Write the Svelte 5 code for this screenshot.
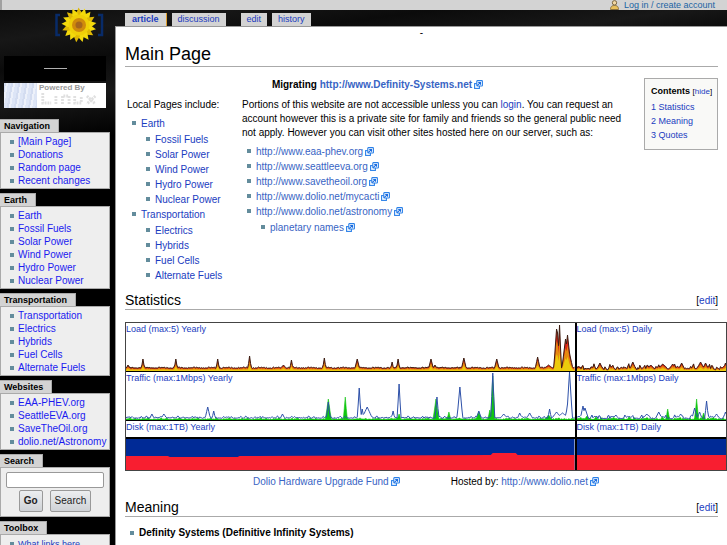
<script>
  const portlets = [
    { title: 'Navigation', items: ['[Main Page]', 'Donations', 'Random page', 'Recent changes'] },
    { title: 'Earth', items: ['Earth', 'Fossil Fuels', 'Solar Power', 'Wind Power', 'Hydro Power', 'Nuclear Power'] },
    { title: 'Transportation', items: ['Transportation', 'Electrics', 'Hybrids', 'Fuel Cells', 'Alternate Fuels'] },
    { title: 'Websites', items: ['EAA-PHEV.org', 'SeattleEVA.org', 'SaveTheOil.org', 'dolio.net/Astronomy'] }
  ];
  const local = [
    { name: 'Earth', items: ['Fossil Fuels', 'Solar Power', 'Wind Power', 'Hydro Power', 'Nuclear Power'] },
    { name: 'Transportation', items: ['Electrics', 'Hybrids', 'Fuel Cells', 'Alternate Fuels'] }
  ];
  const sites = [
    'http://www.eaa-phev.org',
    'http://www.seattleeva.org',
    'http://www.savetheoil.org',
    'http://www.dolio.net/mycacti'
  ];

  // Each peak is [x, height, half width]; a deterministic ripple fills the rest.
  function series(width, base, amp, peaks, seed = 1) {
    const pts = [];
    for (let x = 0; x <= width; x += 1) {
      const r = Math.abs(Math.sin(x * 0.63 * seed) * Math.sin(x * 0.19 + seed) + Math.sin(x * 1.7 + seed) * 0.4);
      let h = base + amp * r;
      for (const [px, ph, pw] of peaks) {
        const d = Math.abs(x - px);
        if (d < pw) h = Math.max(h, ph * (1 - d / pw));
      }
      pts.push([x, h]);
    }
    return pts;
  }
  const line = (pts, k = 1) => pts.map(([x, h]) => `${x},${(48 - h * k).toFixed(1)}`).join(' ');
  const area = (pts, w, k = 1) => `0,48 ${line(pts, k)} ${w},48`;

  const loadYear = series(450, 2.6, 1.4, [
    [2, 6, 3], [17, 12, 2], [50, 12, 2], [92, 12, 2], [124, 15, 2], [158, 6, 5], [166, 11, 2], [199, 13, 2],
    [232, 12, 3], [267, 9, 2], [273, 12, 2], [306, 12, 3], [310, 6, 3], [339, 13, 3], [372, 12, 3], [413, 14, 3], [424, 6, 8],
    [432, 42, 3], [433, 38, 3], [435, 46, 2], [441, 32, 4], [443, 36, 4], [446, 13, 3]
  ]);
  const loadDay = series(150, 1.2, 4.5, [[23, 8, 4], [56, 9, 4], [74, 6, 6], [86, 7, 7], [96, 7, 5], [105, 8, 4], [124, 9, 5], [129, 8, 4], [149, 8, 3]], 1.3);
  const blueYear = series(450, 1.6, 1.8, [
    [26, 6, 3], [38, 6, 4], [82, 13, 3], [88, 9, 2], [157, 6, 3], [203, 18, 2], [234, 32, 2], [237, 11, 2], [242, 13, 6],
    [268, 9, 2], [274, 36, 2], [312, 23, 2], [335, 33, 3], [354, 9, 3], [368, 47, 2], [379, 6, 5], [395, 7, 3],
    [405, 7, 4], [425, 11, 2], [432, 8, 6], [438, 7, 9], [444, 18, 4], [445, 48, 3]
  ], 1.1);
  const greenYear = series(450, 0.4, 1.4, [[203, 21, 3], [220, 23, 2], [311, 21, 3], [324, 8, 2], [354, 8, 3], [365, 10, 2], [368, 44, 2], [274, 6, 2], [424, 5, 4]], 0.8);
  const blueDay = series(150, 1, 3.5, [[6, 14, 3], [8, 12, 4], [39, 5, 4], [70, 6, 5], [82, 8, 4], [104, 6, 4], [118, 12, 3], [123, 8, 3], [130, 19, 2], [140, 6, 4], [149, 8, 3]], 1.2);
  const greenDay = series(150, 0.3, 2, [[91, 11, 2], [120, 21, 2], [127, 7, 2], [10, 4, 3]], 0.9);

  const charts = [
    { span: 'Yearly', w: 450, load: loadYear, blue: blueYear, green: greenYear, disk: '0,17 42,17 44,18 112,18 114,17 366,16 368,14 391,14 393,16 450,16' },
    { span: 'Daily', w: 150, load: loadDay, blue: blueDay, green: greenDay, disk: '0,16 150,16' }
  ];
</script>

{#snippet ext()}
  <svg class="ext" viewBox="0 0 9 9" aria-hidden="true">
    <rect x=".6" y="3.600" width="4.800" height="4.800" fill="#fff" stroke="#2a80e8" stroke-width="1.100" />
    <rect x="2.800" y=".6" width="5.600" height="5.400" rx=".6" fill="#fff" stroke="#2a80e8" stroke-width="1.100" />
    <path d="M3.200 5.600L6 2.900M4.200 2.500h2.300v2.300" fill="none" stroke="#1a6ce0" stroke-width="1.100" />
  </svg>
{/snippet}

<div class="page">
  <header class="personal">
    <svg class="user" viewBox="0 0 9 10" aria-hidden="true">
      <path d="M.5 9.500C.5 6 2.500 5.500 4.500 5.500S8.500 6 8.500 9.500z" fill="#e9c05c" stroke="#8b7342" />
      <circle cx="4.500" cy="2.800" r="2.200" fill="#f3d9a4" stroke="#7c6844" />
    </svg>
    <a href="#login">Log in / create account</a>
  </header>

  <div class="body">
    <aside>
      <a class="logo" href="#main" aria-label="Main Page">
        <svg class="flower" viewBox="0 0 50 38" aria-hidden="true">
          <path d="M6 9H2.500v20H6M44 9h4v20h-4" fill="none" stroke="#082b68" stroke-width="2.500" />
          {#each Array(17) as _, i}
            <path d="M25 19L22 8 24.500 1.500 28 7z" fill={i % 3 ? '#f4da0c' : '#dfb804'} transform={`rotate(${i * 21.200} 25 19)`} />
          {/each}
          <circle cx="25" cy="19" r="10.500" fill="#f0cf08" />
          <circle cx="25" cy="19" r="7" fill="#cf8a0c" />
          <circle cx="25" cy="19" r="3.500" fill="#a5651c" />
        </svg>
        <div class="banner"></div>
        <div class="powered">
          <div class="tux"></div>
          <div class="by">Powered By
            <svg viewBox="0 0 66 14" preserveAspectRatio="none" aria-hidden="true">
              <path d="M4 1v10h9M18 4v8M25 12V4h7v8M38 4v7h7V4M51 4l9 8M60 4l-9 8" fill="none" stroke="#e0e0e0" stroke-width="3" stroke-dasharray="2 1" />
            </svg>
          </div>
        </div>
      </a>

      {#each portlets as p}
        <section class="portlet">
          <h5>{p.title}</h5>
          <div class="box">
            <ul>
              {#each p.items as item}<li><a href="#p">{item}</a></li>{/each}
            </ul>
          </div>
        </section>
      {/each}

      <section class="portlet">
        <h5><label for="q">Search</label></h5>
        <form class="box search" onsubmit={(e) => e.preventDefault()}>
          <input id="q" type="text" />
          <div class="buttons">
            <button type="submit"><b>Go</b></button>
            <button type="submit">Search</button>
          </div>
        </form>
      </section>

      <section class="portlet tools">
        <h5>Toolbox</h5>
        <div class="box">
          <ul><li><a href="#links">What links here</a></li></ul>
        </div>
      </section>
    </aside>

    <div class="column">
      <nav>
        <a class="tab active" href="#article">article</a>
        <a class="tab" href="#discussion">discussion</a>
        <a class="tab gap" href="#edit">edit</a>
        <a class="tab" href="#history">history</a>
      </nav>

      <main>
        <div class="notice">-</div>
        <h1>Main Page</h1>

        <div class="intro">
          <div class="text">
            <p class="migrating">Migrating <a class="out" href="#definity">http://www.Definity-Systems.net</a>{@render ext()}</p>
            <div class="cols">
              <div class="local">
                <p>Local Pages include:</p>
                <ul>
                  {#each local as group}
                    <li>
                      <a href="#g">{group.name}</a>
                      <ul>
                        {#each group.items as item}<li><a href="#i">{item}</a></li>{/each}
                      </ul>
                    </li>
                  {/each}
                </ul>
              </div>
              <div class="about">
                <p>Portions of this website are not accessible unless you can <a href="#login">login</a>. You can request an account however this is a private site for family and friends so the general public need not apply. However you can visit other sites hosted here on our server, such as:</p>
                <ul>
                  {#each sites as s}<li><a class="out" href="#s">{s}</a>{@render ext()}</li>{/each}
                  <li>
                    <a class="out" href="#astronomy">http://www.dolio.net/astronomy</a>{@render ext()}
                    <ul><li><a class="out" href="#names">planetary names</a>{@render ext()}</li></ul>
                  </li>
                </ul>
              </div>
            </div>
          </div>
          <div class="toc">
            <p><b>Contents</b> <small>[<a href="#hide">hide</a>]</small></p>
            <a href="#statistics">1 Statistics</a>
            <a href="#meaning">2 Meaning</a>
            <a href="#quotes">3 Quotes</a>
          </div>
        </div>

        <div class="heading">
          <h2>Statistics</h2>
          <span>[<a href="#edit1">edit</a>]</span>
        </div>

        <div class="charts">
          {#each charts as c}
            <div class="chart">
              <div class="plot">
                <a href="#load">Load (max:5) {c.span}</a>
                <svg viewBox={`0 0 ${c.w} 48`} preserveAspectRatio="none" aria-hidden="true">
                  <polygon points={area(c.load, c.w)} fill="#dc2418" />
                  <polygon points={area(c.load, c.w, 0.72)} fill="#e68a10" />
                  <polygon points={area(c.load, c.w, 0.4)} fill="#eccb0c" />
                  <polyline points={line(c.load)} fill="none" stroke="#3a1c10" />
                </svg>
              </div>
              <div class="plot">
                <a href="#traffic">Traffic (max:1Mbps) {c.span}</a>
                <svg viewBox={`0 0 ${c.w} 48`} preserveAspectRatio="none" aria-hidden="true">
                  <polygon points={area(c.green, c.w)} fill="#0fc60f" stroke="#0fc60f" stroke-width=".6" />
                  <polyline points={line(c.blue)} fill="none" stroke="#2c4fa8" />
                </svg>
              </div>
              <div class="disk">
                <a href="#disk">Disk (max:1TB) {c.span}</a>
                <svg viewBox={`0 0 ${c.w} 31`} preserveAspectRatio="none" aria-hidden="true">
                  <rect width={c.w} height="31" fill="#002a96" />
                  <polygon points={`0,31 ${c.disk} ${c.w},31`} fill="#f81e30" />
                </svg>
              </div>
            </div>
          {/each}
        </div>

        <div class="credits">
          <span><a class="out" href="#fund">Dolio Hardware Upgrade Fund</a>{@render ext()}</span>
          <span>Hosted by: <a class="out" href="#dolio">http://www.dolio.net</a>{@render ext()}</span>
        </div>

        <div class="heading">
          <h2>Meaning</h2>
          <span>[<a href="#edit2">edit</a>]</span>
        </div>
        <ul class="meaning">
          <li><b>Definity Systems (Definitive Infinity Systems)</b></li>
        </ul>
      </main>
    </div>
  </div>
</div>

<style>
  :global(body) { background: #000; }
  .page {
    height: 100vh;
    overflow: hidden;
    display: flex;
    flex-direction: column;
    font: 10px/14px "Liberation Sans", Arial, sans-serif;
    color: #000;
    background: linear-gradient(172deg, #090909 0, #171717 40px, #0b0b0b 70px, #181818 105px, #000 150px);
  }
  p, h1, h2, h5, ul { margin: 0; padding: 0; font-weight: normal; }
  ul { list-style: none; }
  a { color: #1a3cc0; text-decoration: none; }
  .out { color: #3864c4; }
  .ext { width: 9px; height: 9px; margin-left: 2px; vertical-align: -1px; }
  li { position: relative; }
  li::before {
    content: "";
    position: absolute;
    left: -9px;
    top: 5px;
    width: 4px;
    height: 4px;
    background: #638c9c;
  }

  .personal {
    flex: none;
    height: 10px;
    display: flex;
    justify-content: flex-end;
    align-items: center;
    gap: 5px;
    padding-right: 12px;
    background: #d3d3d3;
    border-left: 2px solid #a0a0a0;
    font-size: 9px;
    line-height: 10px;
  }
  .personal a { color: #2064a4; }
  .user { width: 9px; height: 10px; }

  .body { flex: 1; display: flex; gap: 5px; min-height: 0; }
  aside { flex: none; width: 110px; }
  .logo { display: block; padding: 0 4px; margin-bottom: 11px; }
  .flower { display: block; position: relative; width: 50px; height: 38px; margin: -4px 0 12px 50px; }
  .banner {
    height: 25px;
    margin-bottom: 2px;
    background: linear-gradient(#b0b0b0, #b0b0b0) center / 23px 1px no-repeat, #000;
  }
  .powered { display: flex; height: 25px; background: #fff; color: #999; }
  .tux { width: 33px; background: repeating-linear-gradient(100deg, #d3dcf0 0 2px, #edf1fa 2px 4px, #dde5f6 4px 7px); }
  .by { padding-left: 2px; font: bold 8px/9px "Liberation Sans", sans-serif; }
  .by svg { display: block; width: 62px; height: 14px; }

  .portlet { margin-bottom: 4px; }
  h5 {
    display: table;
    height: 13px;
    padding: 0 8px 0 4px;
    box-sizing: border-box;
    background: #d3d3d3;
    border-top: 1px solid #aaa;
    border-right: 1px solid #aaa;
    font-size: 9px;
    line-height: 12px;
    font-weight: bold;
  }
  .box { background: #eee; border: 1px solid #aaa; padding: 2px 0 1px 17px; line-height: 13px; }
  .box a { color: #1a1af0; white-space: nowrap; }
  .box li::before { left: -8px; }
  .search { padding: 4px 5px; display: flex; flex-direction: column; gap: 2px; }
  .search input {
    box-sizing: border-box;
    width: 100%;
    height: 16px;
    padding: 0 3px;
    border: 1px solid #999;
    border-radius: 2px;
    background: #fff;
    font: inherit;
  }
  .buttons { display: flex; justify-content: center; gap: 7px; }
  button {
    height: 22px;
    padding: 0 4px;
    border: 1px solid #999;
    border-radius: 2px;
    background: linear-gradient(#eceef0, #cfd2d6);
    color: #222;
    font: 10px/18px "Liberation Sans", Arial, sans-serif;
  }
  .tools .box a { font-size: 9px; color: #1a3cc0; }

  .column { flex: 1; min-width: 0; display: flex; flex-direction: column; }
  nav { flex: none; display: flex; align-items: flex-end; height: 16px; padding-left: 10px; gap: 5px; }
  .tab { height: 13px; padding: 0 6px; background: #d3d3d3; font-size: 9px; line-height: 12px; }
  .active { padding: 0 7px; font-weight: bold; border-right: 1px solid #e0a030; }
  .gap { margin-left: 10px; }
  main { flex: 1; background: #fff; border: solid #999; border-width: 1px 0 0 1px; padding-left: 9px; }
  .notice { height: 14px; margin-right: 9px; line-height: 12px; text-align: center; }
  h1 { margin-right: 9px; border-bottom: 1px solid #aaa; padding-top: 1px; font-size: 18px; line-height: 24px; }
  .intro { display: flex; align-items: flex-start; gap: 14px; padding: 11px 9px 9px 0; }
  .text { flex: 1; }
  .migrating { text-align: center; font-weight: bold; margin-bottom: 6px; }
  .cols { display: flex; gap: 5px; padding-left: 2px; }
  .local { width: 110px; flex: none; }
  .cols ul { padding-left: 14px; line-height: 15px; }
  .cols p + ul { margin-top: 4px; }
  .cols ul ul { margin-top: 1px; }
  .toc {
    box-sizing: border-box;
    width: 74px;
    flex: none;
    display: flex;
    flex-direction: column;
    padding: 4px 6px 7px;
    white-space: nowrap;
    background: #f9f9f7;
    border: 1px solid #aaa;
    font-size: 9px;
  }
  .toc p { line-height: 16px; }
  small { font-size: 8px; }

  .heading {
    display: flex;
    justify-content: space-between;
    margin-right: 9px;
    border-bottom: 1px solid #aaa;
    line-height: 17px;
  }
  h2 { font-size: 14px; line-height: 17px; }
  .charts {
    display: grid;
    grid-template-columns: 3fr 1fr;
    gap: 2px;
    margin-top: 12px;
    background: #000;
    border: 1px solid #444;
  }
  .chart { min-width: 0; }
  .plot { position: relative; height: 48px; background: #fff; border-bottom: 1px solid #000; }
  .chart a { font-size: 9px; line-height: 13px; white-space: nowrap; }
  .plot a { position: absolute; left: 0; top: 0; }
  .chart svg { display: block; width: 100%; height: 48px; }
  .disk { background: #fff; }
  .disk a { display: block; height: 16px; border-bottom: 2px solid #000; }
  .chart .disk svg { height: 31px; }
  .credits { display: flex; justify-content: center; gap: 51px; padding: 4px 0 10px; }
  .meaning { padding: 9px 0 0 14px; }
</style>
